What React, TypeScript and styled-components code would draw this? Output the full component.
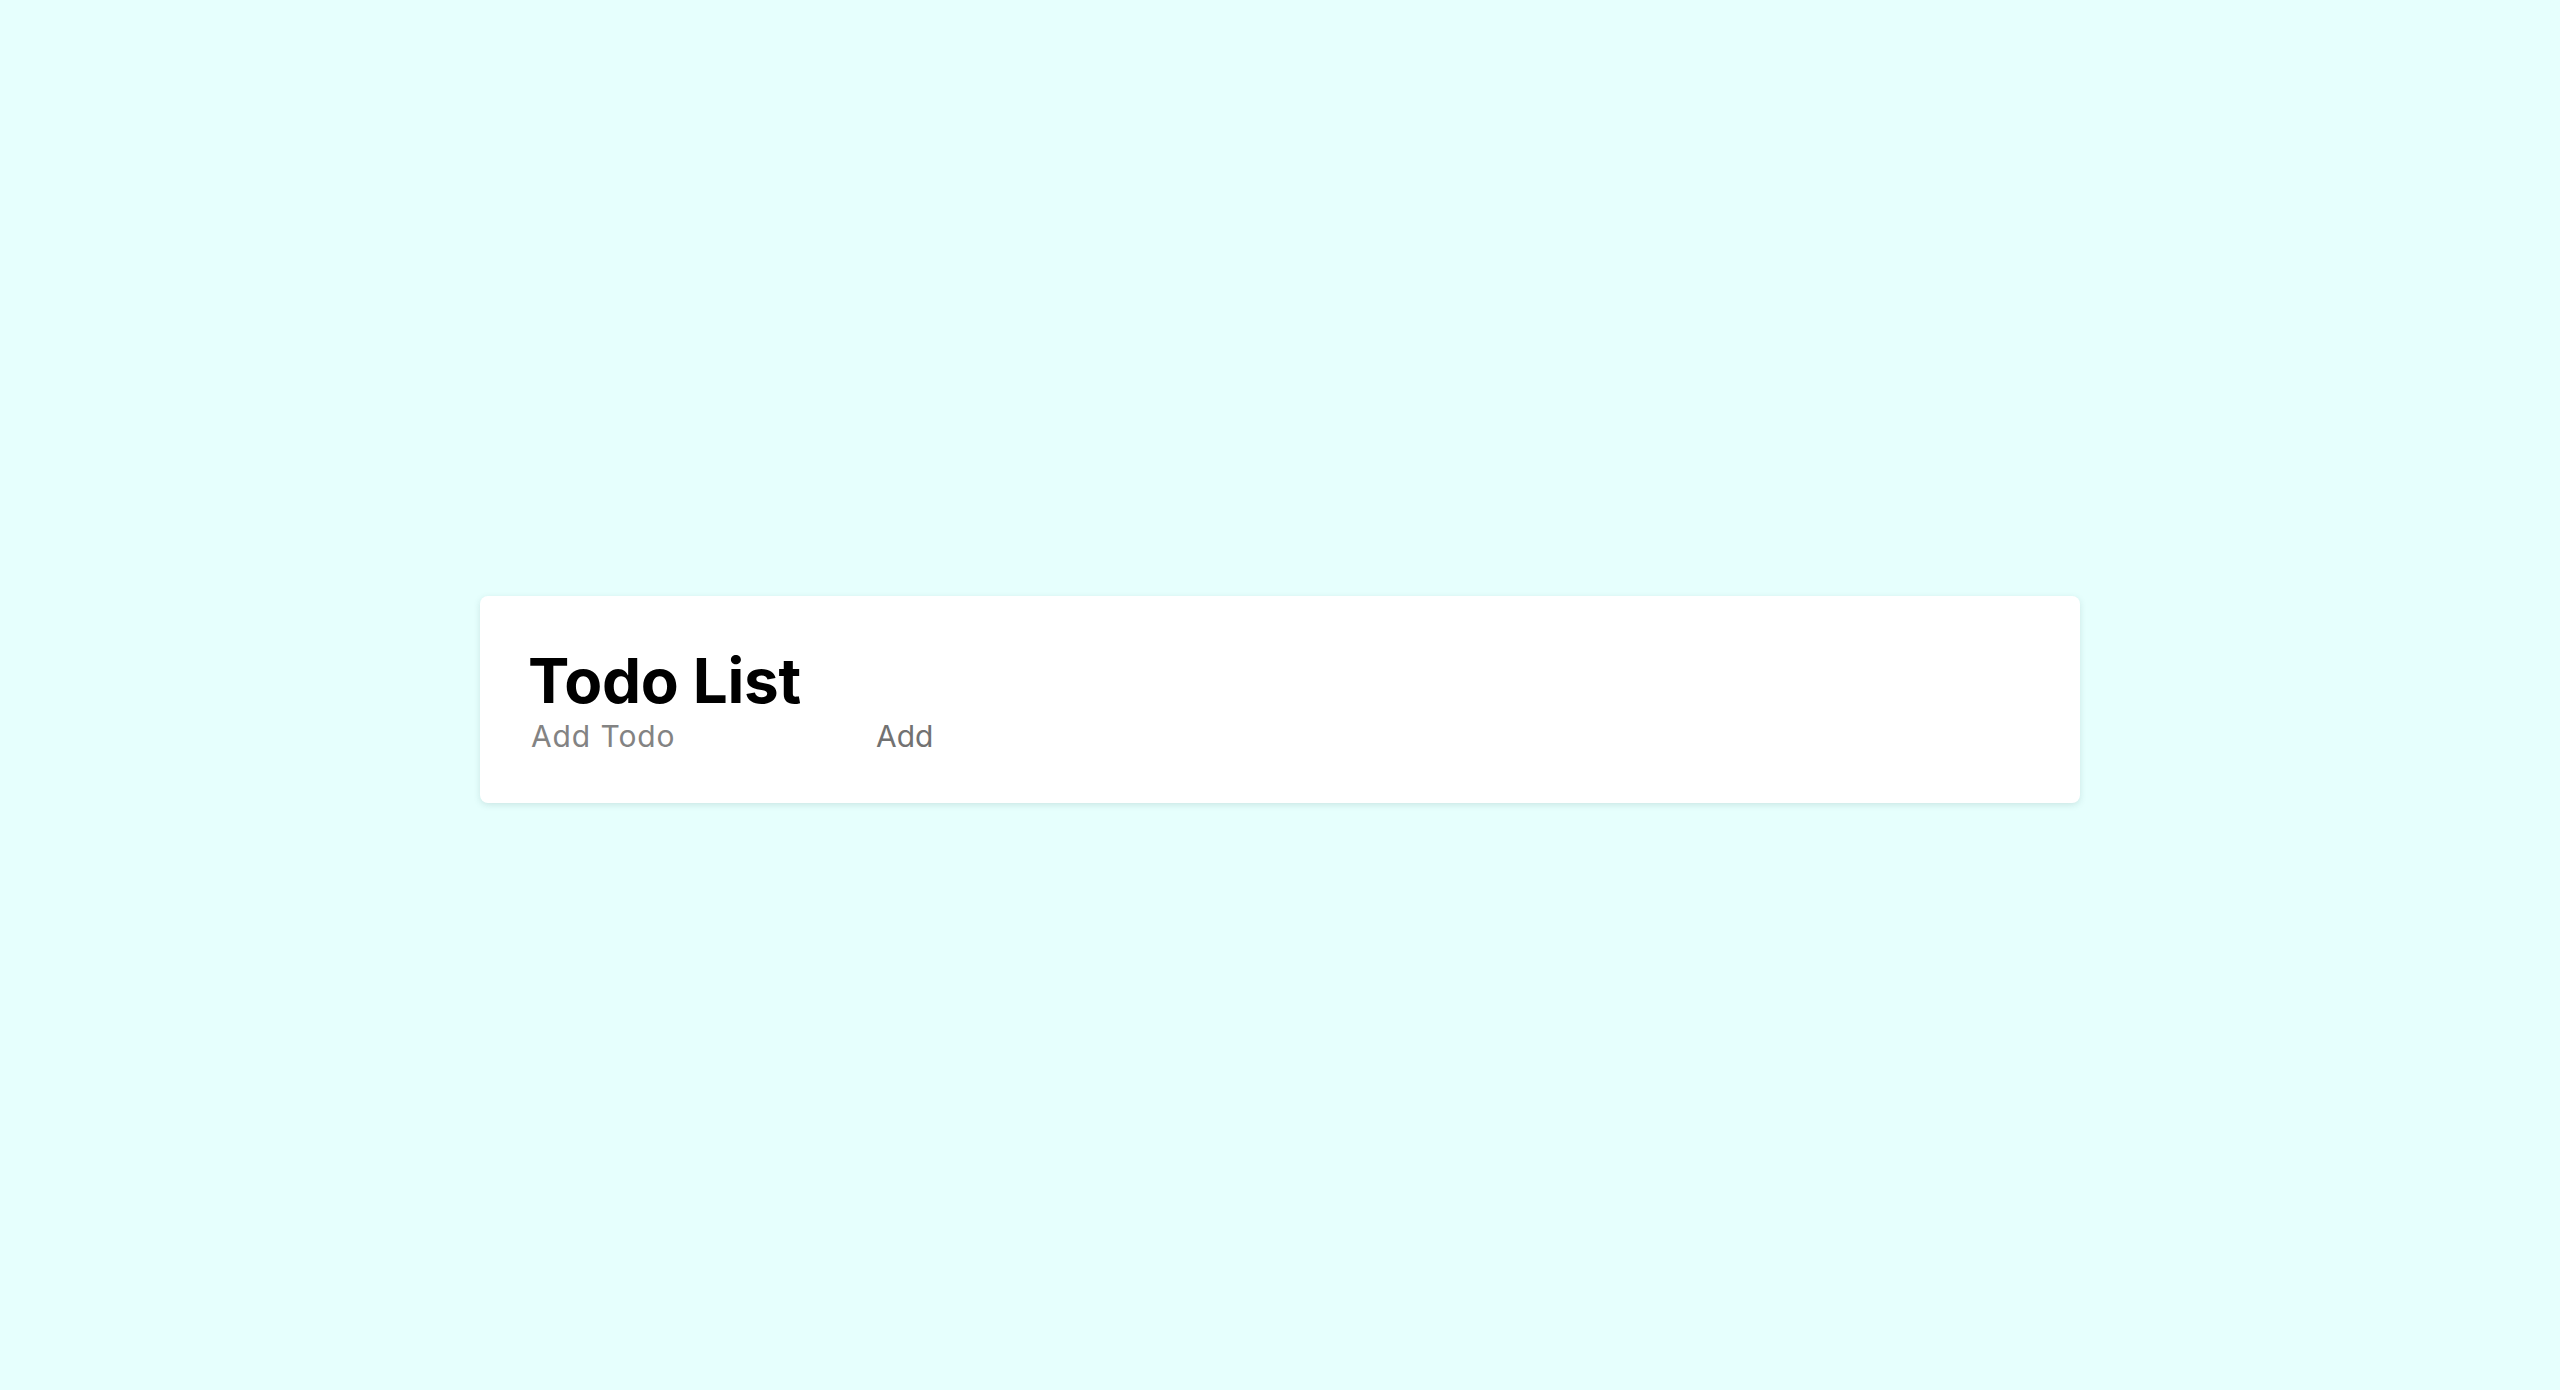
import React, { useState } from "react";
import styled, { createGlobalStyle } from "styled-components";

const GlobalStyle = createGlobalStyle`
  html, body {
    margin: 0;
    padding: 0;
    background: #e6fffd;
    font-family: Inter, "Noto Sans", sans-serif;
  }
`;

const Page = styled.div`
  min-height: 100vh;
  box-sizing: border-box;
  padding-top: 9px;
  display: flex;
  align-items: center;
  justify-content: center;
`;

const Card = styled.div`
  width: 1600px;
  box-sizing: border-box;
  padding: 47px 48px 48px;
  background: #ffffff;
  border-radius: 8px;
  box-shadow: 0 2px 6px rgba(80, 120, 120, 0.18);
`;

const Title = styled.h1`
  margin: 0;
  font-family: Inter, sans-serif;
  font-size: 62px;
  font-weight: 700;
  line-height: 75px;
  color: #000;
  letter-spacing: -0.3px;
`;

const Row = styled.form`
  display: flex;
  align-items: center;
  height: 37px;
`;

const Input = styled.input`
  width: 340px;
  box-sizing: border-box;
  border: none;
  outline: none;
  padding: 0 0 0 3px;
  background: transparent;
  font-family: Inter, sans-serif;
  font-size: 30px;
  letter-spacing: 0.9px;
  line-height: 37px;
  height: 37px;
  color: #333;
  &::placeholder {
    color: #838383;
  }
`;

const Button = styled.button`
  border: none;
  background: transparent;
  padding: 0 8px;
  font-family: Inter, sans-serif;
  font-size: 30px;
  line-height: 37px;
  height: 37px;
  color: #727272;
  cursor: pointer;
`;

export default function App() {
  const [value, setValue] = useState("");
  return (
    <>
      <GlobalStyle />
      <Page>
        <Card>
          <Title>Todo List</Title>
          <Row onSubmit={(e) => { e.preventDefault(); setValue(""); }}>
            <Input
              placeholder="Add Todo"
              value={value}
              onChange={(e) => setValue(e.target.value)}
            />
            <Button type="submit">Add</Button>
          </Row>
        </Card>
      </Page>
    </>
  );
}
